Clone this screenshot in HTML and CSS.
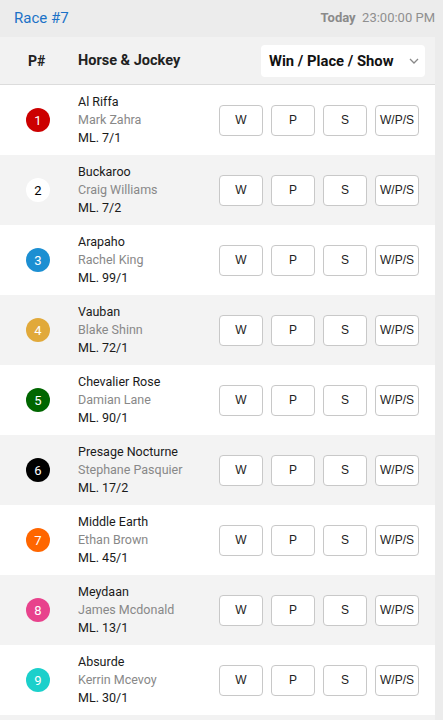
FILE: index.html
```html
<!DOCTYPE html>
<html>
<head>
<meta charset="utf-8">
<link rel="stylesheet" href="styles.css">
</head>
<body>
<div class="page">
  <div class="topbar">
    <span class="race">Race #7</span>
    <span class="when"><b>Today</b>&nbsp; 23:00:00 PM</span>
  </div>
  <div class="panel">
    <div class="thead">
      <div class="th-p">P#</div>
      <div class="th-horse">Horse &amp; Jockey</div>
      <div class="select">Win / Place / Show
        <svg class="chev" width="10" height="6" viewBox="0 0 10 6"><path d="M1 1l4 4 4-4" fill="none" stroke="#888" stroke-width="1.3"/></svg>
      </div>
    </div>
    <div class="row">
      <div class="num c1">1</div>
      <div class="info"><div class="horse">Al Riffa</div><div class="jockey">Mark Zahra</div><div class="ml">ML. 7/1</div></div>
      <div class="btns"><div class="btn">W</div><div class="btn">P</div><div class="btn">S</div><div class="btn">W/P/S</div></div>
    </div>
    <div class="row alt">
      <div class="num c2">2</div>
      <div class="info"><div class="horse">Buckaroo</div><div class="jockey">Craig Williams</div><div class="ml">ML. 7/2</div></div>
      <div class="btns"><div class="btn">W</div><div class="btn">P</div><div class="btn">S</div><div class="btn">W/P/S</div></div>
    </div>
    <div class="row">
      <div class="num c3">3</div>
      <div class="info"><div class="horse">Arapaho</div><div class="jockey">Rachel King</div><div class="ml">ML. 99/1</div></div>
      <div class="btns"><div class="btn">W</div><div class="btn">P</div><div class="btn">S</div><div class="btn">W/P/S</div></div>
    </div>
    <div class="row alt">
      <div class="num c4">4</div>
      <div class="info"><div class="horse">Vauban</div><div class="jockey">Blake Shinn</div><div class="ml">ML. 72/1</div></div>
      <div class="btns"><div class="btn">W</div><div class="btn">P</div><div class="btn">S</div><div class="btn">W/P/S</div></div>
    </div>
    <div class="row">
      <div class="num c5">5</div>
      <div class="info"><div class="horse">Chevalier Rose</div><div class="jockey">Damian Lane</div><div class="ml">ML. 90/1</div></div>
      <div class="btns"><div class="btn">W</div><div class="btn">P</div><div class="btn">S</div><div class="btn">W/P/S</div></div>
    </div>
    <div class="row alt">
      <div class="num c6">6</div>
      <div class="info"><div class="horse">Presage Nocturne</div><div class="jockey">Stephane Pasquier</div><div class="ml">ML. 17/2</div></div>
      <div class="btns"><div class="btn">W</div><div class="btn">P</div><div class="btn">S</div><div class="btn">W/P/S</div></div>
    </div>
    <div class="row">
      <div class="num c7">7</div>
      <div class="info"><div class="horse">Middle Earth</div><div class="jockey">Ethan Brown</div><div class="ml">ML. 45/1</div></div>
      <div class="btns"><div class="btn">W</div><div class="btn">P</div><div class="btn">S</div><div class="btn">W/P/S</div></div>
    </div>
    <div class="row alt">
      <div class="num c8">8</div>
      <div class="info"><div class="horse">Meydaan</div><div class="jockey">James Mcdonald</div><div class="ml">ML. 13/1</div></div>
      <div class="btns"><div class="btn">W</div><div class="btn">P</div><div class="btn">S</div><div class="btn">W/P/S</div></div>
    </div>
    <div class="row">
      <div class="num c9">9</div>
      <div class="info"><div class="horse">Absurde</div><div class="jockey">Kerrin Mcevoy</div><div class="ml">ML. 30/1</div></div>
      <div class="btns"><div class="btn">W</div><div class="btn">P</div><div class="btn">S</div><div class="btn">W/P/S</div></div>
    </div>
    <div class="foot"></div>
  </div>
</div>
</body>
</html>
```
FILE: styles.css
```css
html, body {
  margin: 0;
  padding: 0;
  background: #ececec;
}
body {
  font-family: Roboto, "Liberation Sans", sans-serif;
  color: #111;
}
.page {
  width: 443px;
}
.topbar {
  height: 37px;
  width: 435px;
  display: flex;
  align-items: center;
  justify-content: space-between;
  padding-left: 14px;
  box-sizing: border-box;
}
.race {
  color: #1b72c7;
  font-size: 15px;
  margin-top: -2px;
}
.when {
  color: #8f8f8f;
  font-size: 13px;
  margin-top: -2px;
}
.when b {
  font-weight: 700;
  color: #8a8a8a;
}
.panel {
  width: 435px;
  background: #f2f2f2;
}
.thead {
  height: 47px;
  display: flex;
  align-items: center;
  border-bottom: 1px solid #dcdcdc;
  padding-right: 10px;
}
.th-p {
  font-weight: 700;
  font-size: 14px;
  width: 78px;
  padding-left: 28px;
  box-sizing: border-box;
  color: #222;
}
.th-horse {
  font-weight: 700;
  font-size: 14.5px;
  flex: 1;
  color: #222;
}
.select {
  width: 164px;
  height: 32px;
  background: #fff;
  border-radius: 4px;
  display: flex;
  align-items: center;
  box-sizing: border-box;
  padding-left: 8px;
  font-weight: 700;
  font-size: 14.8px;
  color: #111;
}
.chev {
  margin-left: auto;
  margin-right: 6px;
}
.row {
  height: 70px;
  display: flex;
  align-items: center;
  background: #fff;
  padding-left: 26px;
  padding-right: 16px;
}
.row.alt {
  background: #f3f3f3;
}
.num {
  width: 24px;
  height: 24px;
  border-radius: 50%;
  color: #fff;
  font-size: 13px;
  display: flex;
  align-items: center;
  justify-content: center;
  flex: none;
  margin-right: 28px;
}
.c1 { background: #cc0000; }
.c2 { background: #fff; color: #000; }
.c3 { background: #1c8fd2; }
.c4 { background: #e1a93a; }
.c5 { background: #006600; }
.c6 { background: #000; }
.c7 { background: #ff6600; }
.c8 { background: #e8428c; }
.c9 { background: #1bd0cb; }
.info {
  flex: 1;
  font-size: 12.5px;
  line-height: 18px;
}
.horse, .ml {
  color: #1a1a1a;
}
.jockey {
  color: #888;
}
.btns {
  display: flex;
  gap: 8px;
}
.btn {
  width: 44px;
  height: 31px;
  box-sizing: border-box;
  border: 1px solid #c8c8c8;
  border-radius: 4px;
  background: #fff;
  display: flex;
  align-items: center;
  justify-content: center;
  font-family: "Liberation Sans", Arial, sans-serif;
  font-size: 12px;
  color: #222;
}
.foot {
  height: 10px;
}
```
